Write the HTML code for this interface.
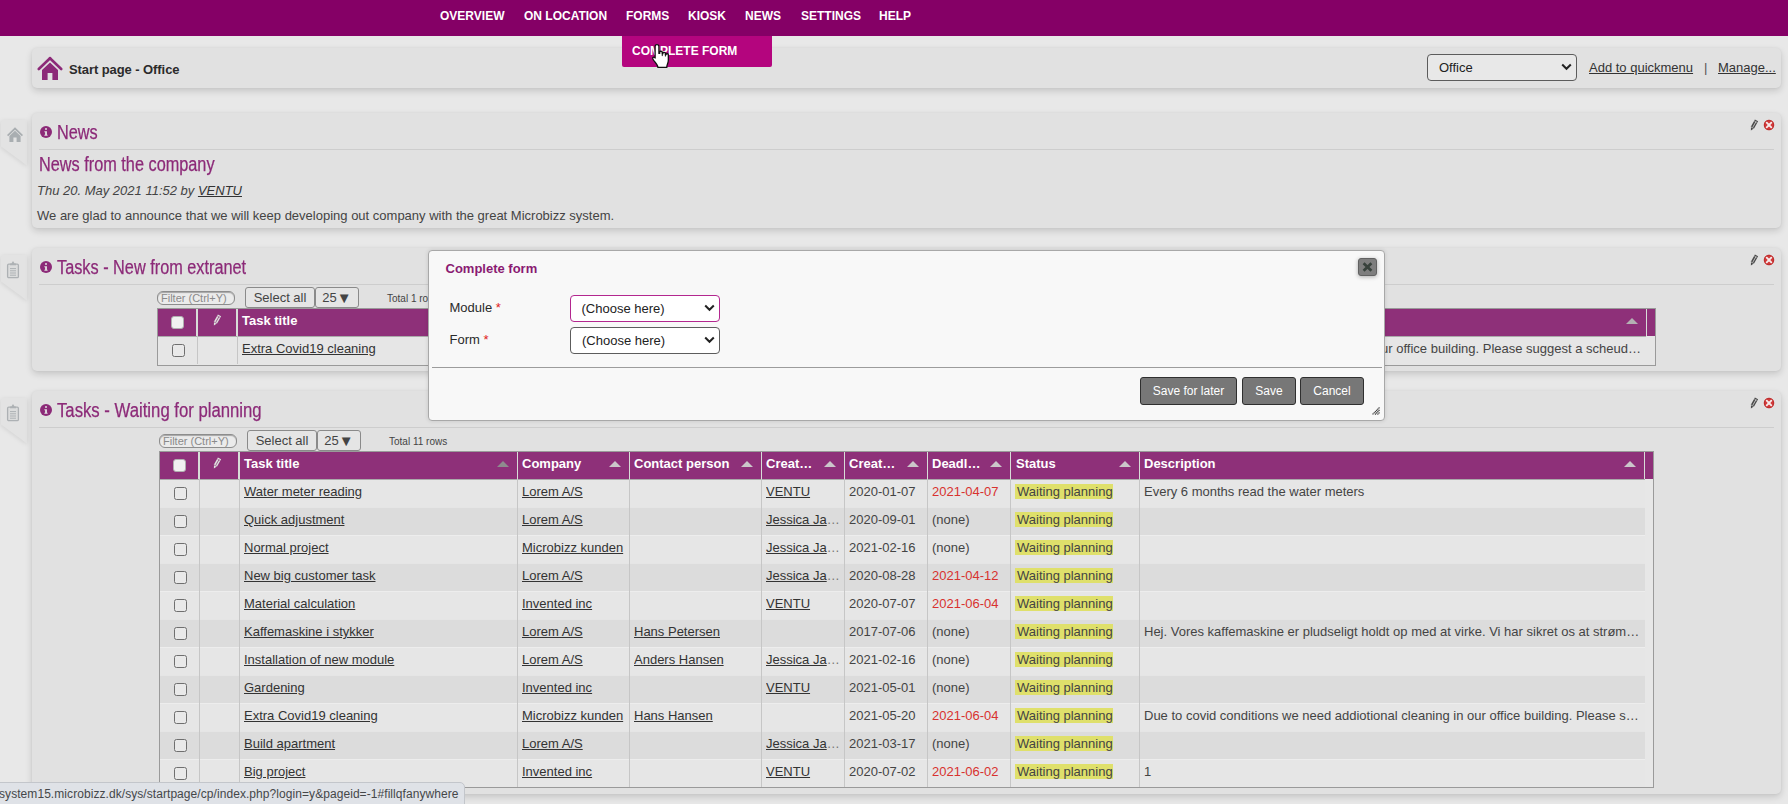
<!DOCTYPE html>
<html><head><meta charset="utf-8"><title>Start page</title>
<style>
*{box-sizing:border-box;margin:0;padding:0}
html,body{width:1788px;height:804px;overflow:hidden;background:#e8e8e8;font-family:"Liberation Sans",sans-serif;font-size:13px;color:#444}
.abs{position:absolute}
#top{position:absolute;left:0;top:0;width:1788px;height:36px;background:#850066}
#top span{position:absolute;top:9px;color:#fff;font-weight:bold;font-size:12px;line-height:14px;white-space:nowrap}
#dd{position:absolute;left:622px;top:36px;width:150px;height:31px;background:#b4057e;border-radius:0 0 2px 2px}
#dd span{position:absolute;left:10px;top:8px;color:#fff;font-weight:bold;font-size:12px;line-height:14px;white-space:nowrap}
.panel{position:absolute;left:32px;width:1749px;background:#e1e1e1;border-radius:5px;box-shadow:0 3px 7px rgba(0,0,0,.15),0 0 3px rgba(0,0,0,.05)}
.tabw{position:absolute;left:0;width:40px;height:60px;filter:drop-shadow(0 1px 2px rgba(0,0,0,.10))}
.tab{position:absolute;left:1px;top:0;width:26px;height:46px;background:#e3e3e3;border-radius:3px 0 0 0;clip-path:polygon(0 0,26px 0,26px 46px,0 27px)}
.hd{position:absolute;left:57px;color:#8c2a78;font-size:19.5px;line-height:24px;white-space:nowrap;transform-origin:0 50%;transform:scaleX(.835);-webkit-text-stroke:.25px #8c2a78}
.hr{position:absolute;left:39px;width:1735px;height:1px;background:#cdcdcd}
.info{position:absolute;left:40px;width:12px;height:12px;border-radius:50%;background:#8c2a78}
.info:before{content:"";position:absolute;left:5px;top:2.2px;width:2.4px;height:2.2px;background:#e1e1e1;border-radius:1px}
.info:after{content:"";position:absolute;left:4.4px;top:5.2px;width:3.2px;height:4.6px;background:#e1e1e1;clip-path:polygon(0 0,80% 0,80% 78%,100% 78%,100% 100%,0 100%,0 78%,22% 78%,22% 22%,0 22%)}
.t{position:absolute;white-space:nowrap;line-height:16px}
u{text-decoration:underline;text-underline-offset:1px;color:#333}
.r.first{box-shadow:inset 0 1px 0 #aaa}
.tbl{position:absolute;border:1px solid #9a9a9a;background:#e6e6e6}
.th{position:absolute;left:0;top:0;height:27px;background:#8e3079}
.th b{position:absolute;top:4px;color:#fff;font-size:13px;line-height:16px;white-space:nowrap}
.th i.s{position:absolute;top:0;width:2px;height:27px;background:#d8dcd8}
.th i.a{position:absolute;top:9px;width:0;height:0;border-left:6px solid transparent;border-right:6px solid transparent;border-bottom:6px solid #cbc6ca;margin-left:-.5px}
.r{position:absolute;left:0;height:28px;width:1485px;box-shadow:inset 0 1px 0 rgba(255,255,255,.28)}
.r.odd{background:#e6e6e6}
.r.even{background:#dcdcdc}
.c{position:absolute;top:5px;height:18px;line-height:16px;white-space:nowrap;overflow:hidden}
.vs{position:absolute;top:27px;width:1px;background:#c6c6c6}
.cb{position:absolute;width:13px;height:13px;border:1px solid #6f6f6f;border-radius:2.5px;background:#e9e9e9}
.hcb{position:absolute;width:13px;height:13px;border:1px solid #b0b0b0;border-radius:3px;background:#f1f1f1}
.hl{background:#dfe06b;padding:0 0 0 2px}
.filter{position:absolute;width:78px;height:14px;border:1px solid #8d8d8d;border-radius:6px;background:#ebebeb;box-shadow:inset 0 1px 1px rgba(0,0,0,.3);font-size:11px;line-height:12px;color:#8a8a8a;padding-left:3px;white-space:nowrap}
.btn{position:absolute;height:21px;border:1px solid #8a8a8a;border-radius:3px;background:#e5e5e5;font-size:13px;line-height:19px;text-align:center;color:#444;white-space:nowrap}
.tot{position:absolute;font-size:10px;line-height:12px;color:#444;white-space:nowrap}
.sel{position:absolute;width:150px;height:27px;border:1px solid #5c5c5c;border-radius:4px;background:#fff}
.sel span{position:absolute;left:11px;top:5px;line-height:16px;color:#222}
.sel svg{position:absolute;right:4px;top:8px}
.gbtn{position:absolute;top:377px;height:28px;border:1.5px solid #2f2f2f;border-radius:3px;background:#777;color:#fff;font-size:12px;line-height:27px;text-align:center;white-space:nowrap}
</style></head><body>

<!-- start page bar -->
<div class="panel" style="top:48px;height:40px"></div>
<svg class="abs" style="left:37px;top:55px" width="26" height="26" viewBox="0 0 26 26"><path d="M13 3.2 L1.8 14" stroke="#8c2a78" stroke-width="2.6" fill="none" stroke-linecap="round"/><path d="M13 3.2 L24.2 14" stroke="#8c2a78" stroke-width="2.6" fill="none" stroke-linecap="round"/><path d="M13 7.4 L5 15 V25 H10.6 V18 H15.4 V25 H21 V15 Z" fill="#8c2a78"/></svg>
<div class="t" style="left:69px;top:62px;font-weight:bold;color:#2b2b2b;letter-spacing:-0.08px">Start page - Office</div>
<div class="sel" style="left:1427px;top:54px;background:#e8e8e8"><span>Office</span><svg width="11" height="8" viewBox="0 0 11 8"><path d="M1.2 1.5 L5.5 5.8 L9.8 1.5" stroke="#222" stroke-width="2" fill="none"/></svg></div>
<div class="t" style="left:1589px;top:60px"><u>Add to quickmenu</u></div>
<div class="t" style="left:1704px;top:60px;color:#555">|</div>
<div class="t" style="left:1718px;top:60px"><u>Manage...</u></div>

<!-- News -->
<div class="tabw" style="top:119.5px"><div class="tab"></div></div>
<svg class="abs" style="left:6px;top:126px" width="18" height="17" viewBox="0 0 18 17"><path d="M9 1.2 L1 9 L2.2 10.2 L9 3.8 L15.8 10.2 L17 9 Z" fill="#a9aeb1"/><path d="M9 4.8 L3.4 10 V16 H7.4 V11.6 H10.6 V16 H14.6 V10 Z" fill="#a9aeb1"/></svg>
<div class="panel" style="top:113px;height:115px"></div>
<div class="info" style="top:126px"></div>
<div class="hd" style="top:120px">News</div>
<div class="hr" style="top:149px"></div>
<div class="hd" style="left:39px;top:152px">News from the company</div>
<div class="t" style="left:37px;top:183px;font-style:italic">Thu 20. May 2021 11:52 by <u>VENTU</u></div>
<div class="t" style="left:37px;top:208px">We are glad to announce that we will keep developing out company with the great Microbizz system.</div>

<!-- Tasks new -->
<div class="tabw" style="top:254.5px"><div class="tab"></div></div>
<svg class="abs" style="left:6px;top:260px" width="14" height="19" viewBox="0 0 14 19"><rect x="1.6" y="4.1" width="10.8" height="13.6" rx="1.2" fill="#dcdddd" stroke="#adb1b4" stroke-width="1.3"/><path d="M4 5.2 V3.4 H5.4 L7 1 L8.6 3.4 H10 V5.2 Z" fill="#adb1b4"/><path d="M4 8.6 H10 M4 10.8 H10 M4 13 H10 M4 15.2 H10" stroke="#adb1b4" stroke-width="1"/></svg>
<div class="panel" style="top:248px;height:123px"></div>
<div class="info" style="top:261px"></div>
<div class="hd" style="top:255px">Tasks - New from extranet</div>
<div class="hr" style="top:284px"></div>
<div class="filter" style="left:157px;top:291px">Filter (Ctrl+Y)</div>
<div class="btn" style="left:245px;top:287px;width:70px">Select all</div>
<div class="btn" style="left:315px;top:287px;width:44px">25<span style="font-size:15px;line-height:0;position:relative;top:.5px">&#9660;</span></div>
<div class="tot" style="left:387px;top:293px">Total 1 rows</div>
<div class="tbl" style="left:157px;top:308px;width:1499px;height:58px">
 <div class="th" style="width:1497px"><span class="hcb" style="left:13px;top:7px"></span><svg class="abs" style="left:55px;top:5px" width="10" height="12" viewBox="0 0 10 12"><path d="M4.9 0.5 L8.1 2.3 L4.2 9.3 L0.9 11.6 L1.0 7.6 Z" fill="#dfe6e0"/><path d="M6.0 2.5 L3.0 7.9" stroke="#8e3178" stroke-width=".8"/><path d="M1.0 7.9 L3.9 9.5" stroke="#8e3178" stroke-width=".7"/><path d="M4.2 1.9 L7.2 3.6" stroke="#8e3178" stroke-width=".5"/></svg><i class="s" style="left:38px"></i><i class="s" style="left:78px"></i><b style="left:84px">Task title</b><i class="a" style="left:1468px;border-bottom-color:#b4b0b3"></i><i class="s" style="left:1488px;width:1px"></i></div>
 <div class="r odd first" style="top:27px;width:1488px;height:28px"><span class="cb" style="left:14px;top:8px"></span><span class="c" style="left:84px;width:300px"><u>Extra Covid19 cleaning</u></span><span class="c" style="left:900px;width:583px;text-align:right">cleaning in our office building. Please suggest a scheud…</span></div>
 <i class="vs" style="left:39px;height:28px"></i><i class="vs" style="left:79px;height:28px"></i>
</div>

<!-- Tasks waiting -->
<div class="tabw" style="top:397.5px"><div class="tab"></div></div>
<svg class="abs" style="left:6px;top:403px" width="14" height="19" viewBox="0 0 14 19"><rect x="1.6" y="4.1" width="10.8" height="13.6" rx="1.2" fill="#dcdddd" stroke="#adb1b4" stroke-width="1.3"/><path d="M4 5.2 V3.4 H5.4 L7 1 L8.6 3.4 H10 V5.2 Z" fill="#adb1b4"/><path d="M4 8.6 H10 M4 10.8 H10 M4 13 H10 M4 15.2 H10" stroke="#adb1b4" stroke-width="1"/></svg>
<div class="panel" style="top:391px;height:403px"></div>
<div class="info" style="top:404px"></div>
<div class="hd" style="top:398px;transform:scaleX(.857)">Tasks - Waiting for planning</div>
<div class="hr" style="top:427px"></div>
<div class="filter" style="left:159px;top:434px">Filter (Ctrl+Y)</div>
<div class="btn" style="left:247px;top:430px;width:70px">Select all</div>
<div class="btn" style="left:317px;top:430px;width:44px">25<span style="font-size:15px;line-height:0;position:relative;top:.5px">&#9660;</span></div>
<div class="tot" style="left:389px;top:436px">Total 11 rows</div>
<div class="tbl" style="left:159px;top:451px;width:1495px;height:337px" id="t2">
 <div class="th" style="width:1493px"><span class="hcb" style="left:13px;top:7px"></span><svg class="abs" style="left:53px;top:5px" width="10" height="12" viewBox="0 0 10 12"><path d="M4.9 0.5 L8.1 2.3 L4.2 9.3 L0.9 11.6 L1.0 7.6 Z" fill="#dfe6e0"/><path d="M6.0 2.5 L3.0 7.9" stroke="#8e3178" stroke-width=".8"/><path d="M1.0 7.9 L3.9 9.5" stroke="#8e3178" stroke-width=".7"/><path d="M4.2 1.9 L7.2 3.6" stroke="#8e3178" stroke-width=".5"/></svg>
  <i class="s" style="left:38px"></i><i class="s" style="left:78px"></i>
  <b style="left:84px">Task title</b><i class="a" style="left:337.5px;border-bottom-color:#8e8b8e"></i><i class="s" style="left:357px;width:1px"></i>
  <b style="left:362px">Company</b><i class="a" style="left:449px"></i><i class="s" style="left:469px;width:1px"></i>
  <b style="left:474px">Contact person</b><i class="a" style="left:581px"></i><i class="s" style="left:601px;width:1px"></i>
  <b style="left:606px">Creat…</b><i class="a" style="left:664px"></i><i class="s" style="left:684px;width:1px"></i>
  <b style="left:689px">Creat…</b><i class="a" style="left:747px"></i><i class="s" style="left:767px;width:1px"></i>
  <b style="left:772px">Deadl…</b><i class="a" style="left:830px"></i><i class="s" style="left:850px;width:1px"></i>
  <b style="left:856px">Status</b><i class="a" style="left:959px"></i><i class="s" style="left:979px;width:1px"></i>
  <b style="left:984px">Description</b><i class="a" style="left:1464px"></i><i class="s" style="left:1484px;width:1px"></i>
 </div>
<div class="r odd first" style="top:27px">
<span class="cb" style="left:14px;top:8px"></span>
<span class="c" style="left:84px;width:270px;"><u>Water meter reading</u></span>
<span class="c" style="left:362px;width:106px;"><u>Lorem A/S</u></span>
<span class="c" style="left:606px;width:76px;"><u>VENTU</u></span>
<span class="c" style="left:689px;width:76px;">2020-01-07</span>
<span class="c" style="left:772px;width:76px;color:#d8322f">2021-04-07</span>
<span class="c" style="left:855px;width:120px;"><span class="hl">Waiting planning</span></span>
<span class="c" style="left:984px;width:498px;">Every 6 months read the water meters</span>
</div>
<div class="r even" style="top:55px">
<span class="cb" style="left:14px;top:8px"></span>
<span class="c" style="left:84px;width:270px;"><u>Quick adjustment</u></span>
<span class="c" style="left:362px;width:106px;"><u>Lorem A/S</u></span>
<span class="c" style="left:606px;width:78px;"><u>Jessica Ja</u><span style="color:#777">…</span></span>
<span class="c" style="left:689px;width:76px;">2020-09-01</span>
<span class="c" style="left:772px;width:76px;">(none)</span>
<span class="c" style="left:855px;width:120px;"><span class="hl">Waiting planning</span></span>
</div>
<div class="r odd" style="top:83px">
<span class="cb" style="left:14px;top:8px"></span>
<span class="c" style="left:84px;width:270px;"><u>Normal project</u></span>
<span class="c" style="left:362px;width:106px;"><u>Microbizz kunden</u></span>
<span class="c" style="left:606px;width:78px;"><u>Jessica Ja</u><span style="color:#777">…</span></span>
<span class="c" style="left:689px;width:76px;">2021-02-16</span>
<span class="c" style="left:772px;width:76px;">(none)</span>
<span class="c" style="left:855px;width:120px;"><span class="hl">Waiting planning</span></span>
</div>
<div class="r even" style="top:111px">
<span class="cb" style="left:14px;top:8px"></span>
<span class="c" style="left:84px;width:270px;"><u>New big customer task</u></span>
<span class="c" style="left:362px;width:106px;"><u>Lorem A/S</u></span>
<span class="c" style="left:606px;width:78px;"><u>Jessica Ja</u><span style="color:#777">…</span></span>
<span class="c" style="left:689px;width:76px;">2020-08-28</span>
<span class="c" style="left:772px;width:76px;color:#d8322f">2021-04-12</span>
<span class="c" style="left:855px;width:120px;"><span class="hl">Waiting planning</span></span>
</div>
<div class="r odd" style="top:139px">
<span class="cb" style="left:14px;top:8px"></span>
<span class="c" style="left:84px;width:270px;"><u>Material calculation</u></span>
<span class="c" style="left:362px;width:106px;"><u>Invented inc</u></span>
<span class="c" style="left:606px;width:76px;"><u>VENTU</u></span>
<span class="c" style="left:689px;width:76px;">2020-07-07</span>
<span class="c" style="left:772px;width:76px;color:#d8322f">2021-06-04</span>
<span class="c" style="left:855px;width:120px;"><span class="hl">Waiting planning</span></span>
</div>
<div class="r even" style="top:167px">
<span class="cb" style="left:14px;top:8px"></span>
<span class="c" style="left:84px;width:270px;"><u>Kaffemaskine i stykker</u></span>
<span class="c" style="left:362px;width:106px;"><u>Lorem A/S</u></span>
<span class="c" style="left:474px;width:125px;"><u>Hans Petersen</u></span>
<span class="c" style="left:689px;width:76px;">2017-07-06</span>
<span class="c" style="left:772px;width:76px;">(none)</span>
<span class="c" style="left:855px;width:120px;"><span class="hl">Waiting planning</span></span>
<span class="c" style="left:984px;width:498px;">Hej. Vores kaffemaskine er pludseligt holdt op med at virke. Vi har sikret os at strøm…</span>
</div>
<div class="r odd" style="top:195px">
<span class="cb" style="left:14px;top:8px"></span>
<span class="c" style="left:84px;width:270px;"><u>Installation of new module</u></span>
<span class="c" style="left:362px;width:106px;"><u>Lorem A/S</u></span>
<span class="c" style="left:474px;width:125px;"><u>Anders Hansen</u></span>
<span class="c" style="left:606px;width:78px;"><u>Jessica Ja</u><span style="color:#777">…</span></span>
<span class="c" style="left:689px;width:76px;">2021-02-16</span>
<span class="c" style="left:772px;width:76px;">(none)</span>
<span class="c" style="left:855px;width:120px;"><span class="hl">Waiting planning</span></span>
</div>
<div class="r even" style="top:223px">
<span class="cb" style="left:14px;top:8px"></span>
<span class="c" style="left:84px;width:270px;"><u>Gardening</u></span>
<span class="c" style="left:362px;width:106px;"><u>Invented inc</u></span>
<span class="c" style="left:606px;width:76px;"><u>VENTU</u></span>
<span class="c" style="left:689px;width:76px;">2021-05-01</span>
<span class="c" style="left:772px;width:76px;">(none)</span>
<span class="c" style="left:855px;width:120px;"><span class="hl">Waiting planning</span></span>
</div>
<div class="r odd" style="top:251px">
<span class="cb" style="left:14px;top:8px"></span>
<span class="c" style="left:84px;width:270px;"><u>Extra Covid19 cleaning</u></span>
<span class="c" style="left:362px;width:106px;"><u>Microbizz kunden</u></span>
<span class="c" style="left:474px;width:125px;"><u>Hans Hansen</u></span>
<span class="c" style="left:689px;width:76px;">2021-05-20</span>
<span class="c" style="left:772px;width:76px;color:#d8322f">2021-06-04</span>
<span class="c" style="left:855px;width:120px;"><span class="hl">Waiting planning</span></span>
<span class="c" style="left:984px;width:498px;">Due to covid conditions we need addiotional cleaning in our office building. Please s…</span>
</div>
<div class="r even" style="top:279px">
<span class="cb" style="left:14px;top:8px"></span>
<span class="c" style="left:84px;width:270px;"><u>Build apartment</u></span>
<span class="c" style="left:362px;width:106px;"><u>Lorem A/S</u></span>
<span class="c" style="left:606px;width:78px;"><u>Jessica Ja</u><span style="color:#777">…</span></span>
<span class="c" style="left:689px;width:76px;">2021-03-17</span>
<span class="c" style="left:772px;width:76px;">(none)</span>
<span class="c" style="left:855px;width:120px;"><span class="hl">Waiting planning</span></span>
</div>
<div class="r odd" style="top:307px">
<span class="cb" style="left:14px;top:8px"></span>
<span class="c" style="left:84px;width:270px;"><u>Big project</u></span>
<span class="c" style="left:362px;width:106px;"><u>Invented inc</u></span>
<span class="c" style="left:606px;width:76px;"><u>VENTU</u></span>
<span class="c" style="left:689px;width:76px;">2020-07-02</span>
<span class="c" style="left:772px;width:76px;color:#d8322f">2021-06-02</span>
<span class="c" style="left:855px;width:120px;"><span class="hl">Waiting planning</span></span>
<span class="c" style="left:984px;width:498px;">1</span>
</div>
 <i class="vs" style="left:39px;height:308px"></i><i class="vs" style="left:79px;height:308px"></i><i class="vs" style="left:357px;height:308px"></i><i class="vs" style="left:469px;height:308px"></i><i class="vs" style="left:601px;height:308px"></i><i class="vs" style="left:684px;height:308px"></i><i class="vs" style="left:767px;height:308px"></i><i class="vs" style="left:850px;height:308px"></i><i class="vs" style="left:979px;height:308px"></i>
 <div class="abs" style="left:1485px;top:27px;width:8px;height:308px;background:#e7e7e7"></div>
</div>

<svg class="abs" style="left:1750px;top:119px" width="10" height="12" viewBox="0 0 10 12"><path d="M4.9 0.5 L8.1 2.3 L4.2 9.3 L0.9 11.6 L1.0 7.6 Z" fill="#484848"/><path d="M6.0 2.5 L3.0 7.9" stroke="#e1e1e1" stroke-width=".8"/><path d="M1.0 7.9 L3.9 9.5" stroke="#e1e1e1" stroke-width=".7"/><path d="M4.2 1.9 L7.2 3.6" stroke="#e1e1e1" stroke-width=".5"/></svg>
<svg class="abs" style="left:1763px;top:119px" width="12" height="12" viewBox="0 0 12 12"><circle cx="6" cy="6" r="5.2" fill="#d23a3a"/><circle cx="6" cy="6" r="4.7" fill="none" stroke="#b52a2a" stroke-width=".8"/><path d="M3.7 3.7 L8.3 8.3 M8.3 3.7 L3.7 8.3" stroke="#f6eaea" stroke-width="1.9" stroke-linecap="round"/></svg><svg class="abs" style="left:1750px;top:254px" width="10" height="12" viewBox="0 0 10 12"><path d="M4.9 0.5 L8.1 2.3 L4.2 9.3 L0.9 11.6 L1.0 7.6 Z" fill="#484848"/><path d="M6.0 2.5 L3.0 7.9" stroke="#e1e1e1" stroke-width=".8"/><path d="M1.0 7.9 L3.9 9.5" stroke="#e1e1e1" stroke-width=".7"/><path d="M4.2 1.9 L7.2 3.6" stroke="#e1e1e1" stroke-width=".5"/></svg>
<svg class="abs" style="left:1763px;top:254px" width="12" height="12" viewBox="0 0 12 12"><circle cx="6" cy="6" r="5.2" fill="#d23a3a"/><circle cx="6" cy="6" r="4.7" fill="none" stroke="#b52a2a" stroke-width=".8"/><path d="M3.7 3.7 L8.3 8.3 M8.3 3.7 L3.7 8.3" stroke="#f6eaea" stroke-width="1.9" stroke-linecap="round"/></svg><svg class="abs" style="left:1750px;top:397px" width="10" height="12" viewBox="0 0 10 12"><path d="M4.9 0.5 L8.1 2.3 L4.2 9.3 L0.9 11.6 L1.0 7.6 Z" fill="#484848"/><path d="M6.0 2.5 L3.0 7.9" stroke="#e1e1e1" stroke-width=".8"/><path d="M1.0 7.9 L3.9 9.5" stroke="#e1e1e1" stroke-width=".7"/><path d="M4.2 1.9 L7.2 3.6" stroke="#e1e1e1" stroke-width=".5"/></svg>
<svg class="abs" style="left:1763px;top:397px" width="12" height="12" viewBox="0 0 12 12"><circle cx="6" cy="6" r="5.2" fill="#d23a3a"/><circle cx="6" cy="6" r="4.7" fill="none" stroke="#b52a2a" stroke-width=".8"/><path d="M3.7 3.7 L8.3 8.3 M8.3 3.7 L3.7 8.3" stroke="#f6eaea" stroke-width="1.9" stroke-linecap="round"/></svg>

<!-- top bar -->
<div id="top">
 <span style="left:440px">OVERVIEW</span><span style="left:524px">ON LOCATION</span><span style="left:626px">FORMS</span><span style="left:688px">KIOSK</span><span style="left:745px">NEWS</span><span style="left:801px">SETTINGS</span><span style="left:879px">HELP</span>
</div>
<div id="dd"><span>COMPLETE FORM</span></div>

<!-- dialog -->
<div class="abs" id="dlg" style="left:428px;top:250px;width:957px;height:171px;background:#f8f8f8;border:1px solid #a8a8a8;border-radius:4px;box-shadow:0 0 4px rgba(0,0,0,.12)"></div>
<div class="t" style="left:445.5px;top:261px;font-weight:bold;color:#8a1a72">Complete form</div>
<div class="t" style="left:449.5px;top:300px;color:#2a2a2a">Module <span style="color:#e02020">*</span></div>
<div class="t" style="left:449.5px;top:332px;color:#2a2a2a">Form <span style="color:#e02020">*</span></div>
<div class="sel" style="left:570px;top:295px;border:1.5px solid #b3278f"><span style="top:4.5px;left:10.5px">(Choose here)</span><svg width="11" height="8" viewBox="0 0 11 8"><path d="M1.2 1.5 L5.5 5.8 L9.8 1.5" stroke="#222" stroke-width="2" fill="none"/></svg></div>
<div class="sel" style="left:570px;top:327px"><span>(Choose here)</span><svg width="11" height="8" viewBox="0 0 11 8"><path d="M1.2 1.5 L5.5 5.8 L9.8 1.5" stroke="#222" stroke-width="2" fill="none"/></svg></div>
<div class="abs" style="left:432px;top:367px;width:950px;height:1px;background:#9c9c9c"></div>
<div class="gbtn" style="left:1140px;width:97px">Save for later</div>
<div class="gbtn" style="left:1242px;width:54px">Save</div>
<div class="gbtn" style="left:1300px;width:64px">Cancel</div>
<div class="abs" style="left:1358px;top:258px;width:19px;height:18px;background:#7e7e7e;border:1px solid #616161;border-radius:3px;box-shadow:0 1px 4px rgba(0,0,0,.3)"><svg class="abs" style="left:3px;top:3px" width="11" height="10" viewBox="0 0 11 10"><path d="M1.6 1.2 L9.4 8.8 M9.4 1.2 L1.6 8.8" stroke="#38423c" stroke-width="2.7"/></svg></div>
<svg class="abs" style="left:1372px;top:407px" width="8" height="8" viewBox="0 0 8 8"><path d="M7.5 0.5 L0.5 7.5 M7.5 3 L3 7.5 M7.5 5.5 L5.5 7.5" stroke="#333" stroke-width="1.1" stroke-dasharray="1.3 .4"/></svg>

<!-- cursor -->
<svg class="abs" style="left:651px;top:43px" width="19.5" height="26" viewBox="0 0 18 25" preserveAspectRatio="none"><path d="M5.5 1.5 C6.6 1.5 7.3 2.2 7.3 3.4 V10 L8 10 V8.6 C8 7.6 10.4 7.6 10.4 8.8 V10.4 L11 10.4 V9.6 C11 8.6 13.3 8.7 13.3 9.9 V11.2 L13.9 11.2 V10.8 C13.9 9.9 16 10 16 11.4 V16.5 C16 19.5 14.6 20.5 14.6 23.5 H6.4 C6.4 21 3.4 18.4 1.8 15.6 C0.9 14 2.6 12.9 3.8 14.4 L3.8 3.4 C3.8 2.2 4.4 1.5 5.5 1.5 Z" fill="#fff" stroke="#111" stroke-width="1.2" stroke-linejoin="round"/><path d="M10.4 10.4 V12.6 M13.3 11.2 V13" stroke="#111" stroke-width=".9"/></svg>

<!-- status bar -->
<div class="abs" style="left:-2px;top:782px;width:467px;height:24px;background:#dfe2e7;border:1px solid #c3c6cb;border-radius:0 5px 0 0"></div>
<div class="t" style="left:-1px;top:786px;font-size:12px;color:#454749;letter-spacing:0.065px">system15.microbizz.dk/sys/startpage/cp/index.php?login=y&amp;pageid=-1#fillqfanywhere</div>
</body></html>
